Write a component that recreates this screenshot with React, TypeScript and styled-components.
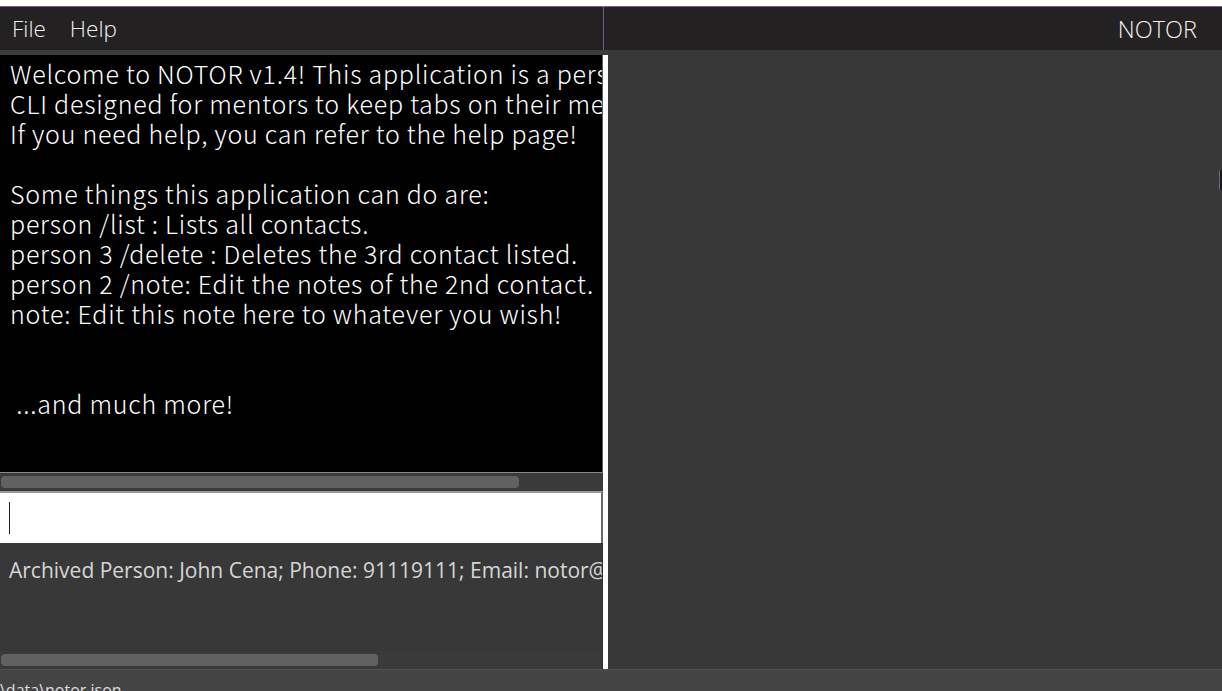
import React from "react";
import styled, { createGlobalStyle } from "styled-components";

const Global = createGlobalStyle`
  html, body { margin: 0; padding: 0; background: #ffffff; overflow: hidden; }
  #root { width: 1222px; height: 691px; }
`;

const Window = styled.div`
  width: 1222px;
  height: 691px;
  display: flex;
  flex-direction: column;
  padding-top: 6px;
  box-sizing: border-box;
  background: #ffffff;
`;

const Header = styled.div`
  display: flex;
  height: 44px;
  flex: none;
`;

const MenuBar = styled.div`
  width: 604px;
  background: #232122;
  border-top: 1px solid #7b5a91;
  border-right: 1px solid #7b5a91;
  display: flex;
  align-items: center;
  gap: 24px;
  padding-left: 12px;
  box-sizing: border-box;
`;

const MenuItem = styled.span`
  font-family: "Open Sans", "Noto Sans", sans-serif;
  font-weight: 300;
  font-size: 22.5px;
  color: #f2f2f2;
`;

const TitleBar = styled.div`
  flex: 1;
  background: #232122;
  border-top: 1px solid #7b5a91;
  display: flex;
  align-items: center;
  justify-content: flex-end;
  padding-right: 25px;
  font-family: "Open Sans", "Noto Sans", sans-serif;
  font-weight: 300;
  font-size: 23.5px;
  color: #f2f2f2;
`;

const Main = styled.div`
  flex: 1;
  display: flex;
  min-height: 0;
`;

const LeftColumn = styled.div`
  width: 603px;
  display: flex;
  flex-direction: column;
  background: #383838;
  border-top: 5px solid #3c3c3c;
`;

const Output = styled.div`
  height: 417px;
  background: #000000;
  border-right: 1px solid #5a5a5a;
  overflow: hidden;
  padding: 3px 0 0 10px;
  box-sizing: border-box;
  font-family: "Noto Sans CJK JP", "Liberation Sans", sans-serif;
  font-weight: 300;
  font-size: 25px;
  letter-spacing: 0.75px;
  line-height: 30px;
  color: #ffffff;
  white-space: pre;
`;

const ScrollTrack = styled.div<{ $top?: boolean }>`
  height: ${(p) => (p.$top ? "19px" : "18px")};
  flex: none;
  background: #3a3a3a;
  border-top: ${(p) => (p.$top ? "1px solid #8a8a8a" : "none")};
  display: flex;
  align-items: center;
  padding-left: 1px;
  box-sizing: border-box;
`;

const Thumb = styled.div<{ $w: number }>`
  width: ${(p) => p.$w}px;
  height: 12px;
  border-radius: 4px;
  background: #616161;
`;

const InputBox = styled.div`
  height: 52px;
  flex: none;
  background: #ffffff;
  border-top: 2px solid #9a9a9a;
  border-right: 2px solid #6a6a6a;
  box-sizing: border-box;
  display: flex;
  align-items: center;
  padding-left: 9px;
`;

const Caret = styled.div`
  width: 1px;
  height: 32px;
  background: #222;
`;

const Result = styled.div`
  flex: 1;
  display: flex;
  flex-direction: column;
  border-right: 1px solid #2e2e2e;
`;

const ResultText = styled.div`
  flex: 1;
  padding: 13px 0 0 9px;
  font-family: "Open Sans", "Noto Sans", sans-serif;
  font-size: 21px;
  color: #d6d6d6;
  white-space: pre;
  overflow: hidden;
`;

const Divider = styled.div`
  width: 5px;
  background: #ffffff;
  border-top: 5px solid #3c3c3c;
`;

const RightPanel = styled.div`
  flex: 1;
  background: #383838;
  position: relative;
`;

const EdgeMark = styled.div`
  position: absolute;
  right: 0;
  top: 120px;
  width: 2px;
  height: 20px;
  background: #1a1a1a;
  border-left: 1px solid #7b5a91;
`;

const StatusBar = styled.div`
  height: 22px;
  flex: none;
  background: #444444;
  border-top: 1px solid #505050;
  overflow: hidden;
  font-family: "Open Sans", "Noto Sans", sans-serif;
  font-size: 16px;
  color: #dddddd;
  line-height: 16px;
  padding-top: 12px;
  box-sizing: border-box;
  white-space: pre;
`;

const outputText = `Welcome to NOTOR v1.4! This application is a personal
CLI designed for mentors to keep tabs on their mentees.
If you need help, you can refer to the help page!

Some things this application can do are:
person /list : Lists all contacts.
person 3 /delete : Deletes the 3rd contact listed.
person 2 /note: Edit the notes of the 2nd contact.
note: Edit this note here to whatever you wish!


 ...and much more!`;

export default function App() {
  return (
    <>
      <Global />
      <Window>
        <Header>
          <MenuBar>
            <MenuItem>File</MenuItem>
            <MenuItem>Help</MenuItem>
          </MenuBar>
          <TitleBar>NOTOR</TitleBar>
        </Header>
        <Main>
          <LeftColumn>
            <Output>{outputText}</Output>
            <ScrollTrack $top>
              <Thumb $w={518} />
            </ScrollTrack>
            <InputBox>
              <Caret />
            </InputBox>
            <Result>
              <ResultText>
                Archived Person: John Cena; Phone: 91119111; Email: notor@example.com
              </ResultText>
              <ScrollTrack>
                <Thumb $w={377} />
              </ScrollTrack>
            </Result>
          </LeftColumn>
          <Divider />
          <RightPanel>
            <EdgeMark />
          </RightPanel>
        </Main>
        <StatusBar>\data\notor.json</StatusBar>
      </Window>
    </>
  );
}
